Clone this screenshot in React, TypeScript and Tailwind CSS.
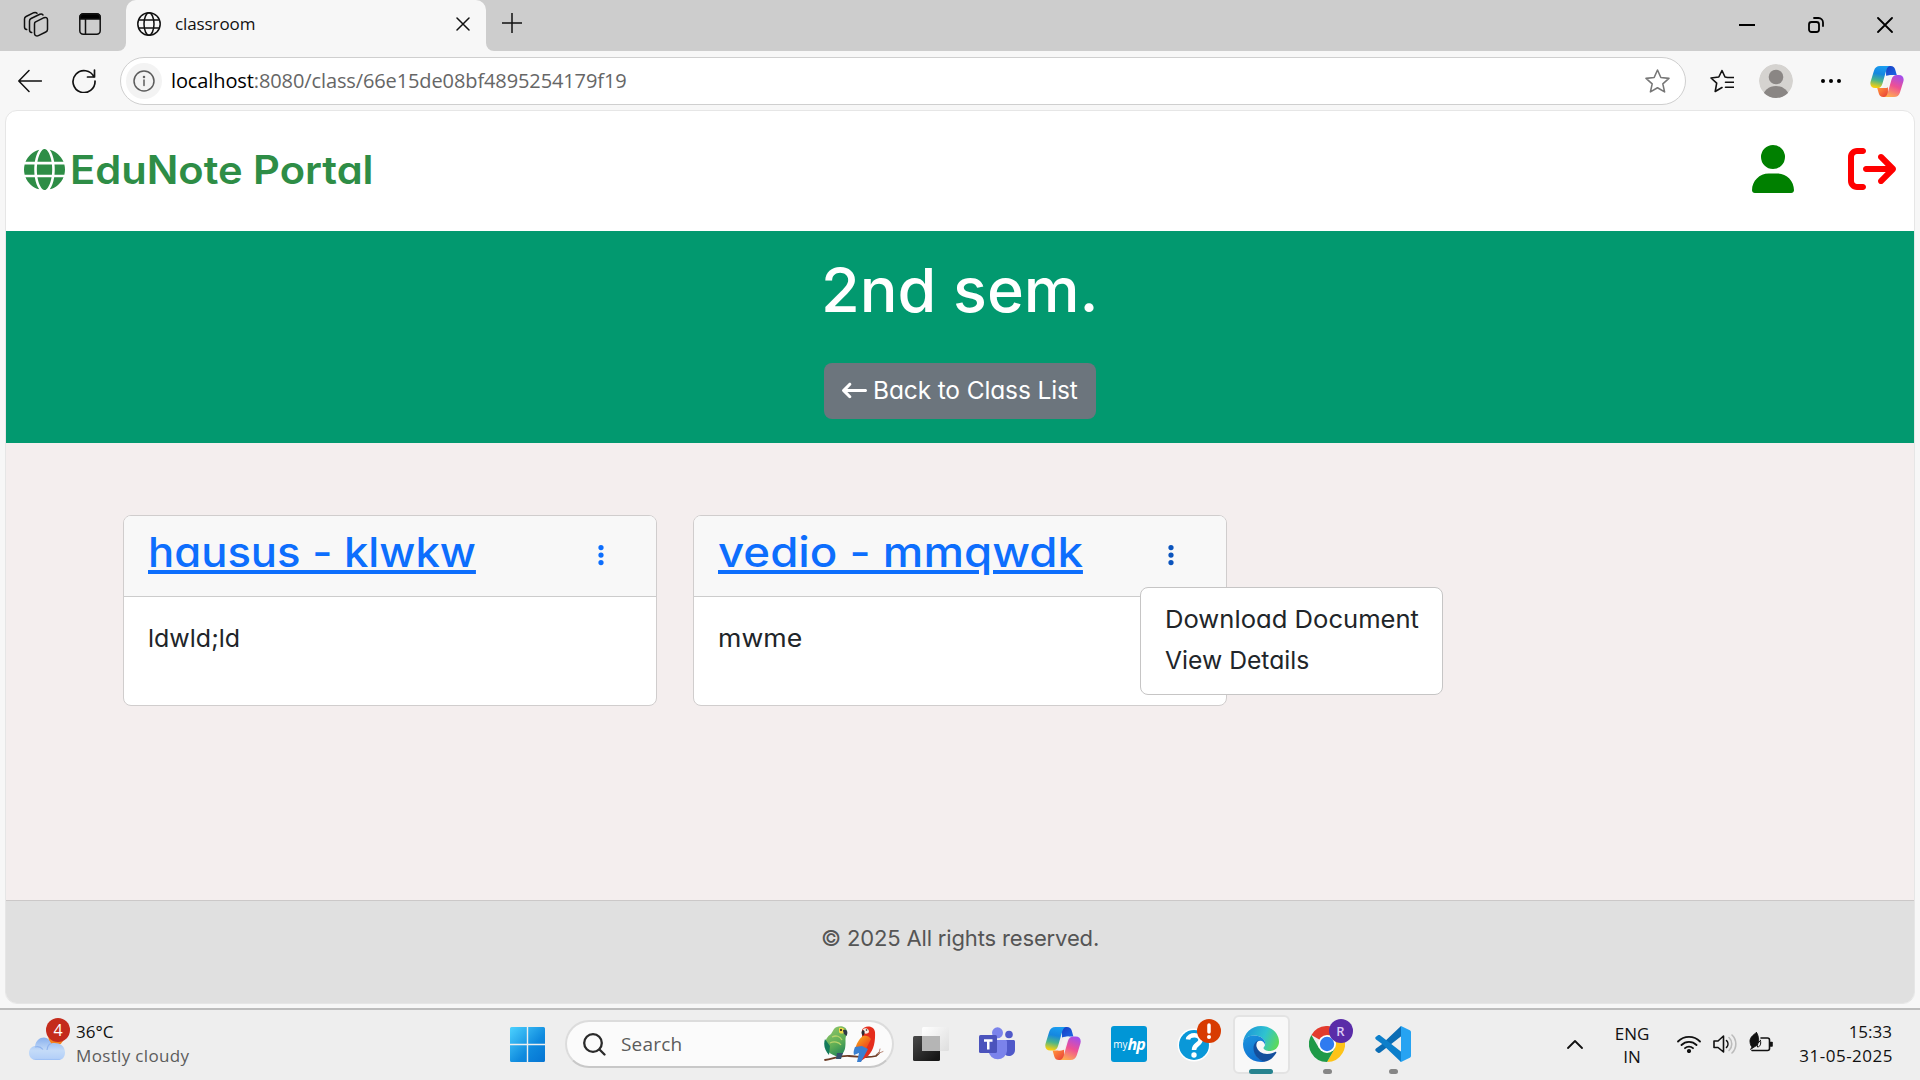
import type { ReactNode } from "react";
import {
  FaArrowLeftLong,
  FaArrowRightFromBracket,
  FaEllipsisVertical,
  FaGlobe,
  FaUser,
} from "react-icons/fa6";

const CopilotIcon = ({ id, className }: { id: string; className: string }) => (
  <svg viewBox="0 0 36 33" className={className} fill="none">
    <defs>
      <linearGradient id={id + "a"} x1="12" y1="0" x2="7" y2="24" gradientUnits="userSpaceOnUse">
        <stop offset="0" stopColor="#1a9df0" />
        <stop offset=".35" stopColor="#1587e0" />
        <stop offset=".65" stopColor="#4bb58a" />
        <stop offset=".95" stopColor="#f5cf10" />
      </linearGradient>
      <linearGradient id={id + "b"} x1="30" y1="9" x2="20" y2="33" gradientUnits="userSpaceOnUse">
        <stop offset="0" stopColor="#a04df0" />
        <stop offset=".5" stopColor="#ee5094" />
        <stop offset="1" stopColor="#ffb04f" />
      </linearGradient>
      <linearGradient id={id + "c"} x1="18" y1="0" x2="26" y2="9" gradientUnits="userSpaceOnUse">
        <stop offset="0" stopColor="#1a3fc4" />
        <stop offset="1" stopColor="#1b62e0" />
      </linearGradient>
      <linearGradient id={id + "d"} x1="10" y1="24" x2="18" y2="33" gradientUnits="userSpaceOnUse">
        <stop offset="0" stopColor="#ff8a3a" />
        <stop offset="1" stopColor="#e8403a" />
      </linearGradient>
    </defs>
    <path d="M17 0h5c2.600 0 4 1.400 4.700 3.600L28.400 9.500H23c-2 0-3.500 .3-6 1z" fill={`url(#${id}c)`} />
    <path d="M19 33h-5c-2.600 0-4-1.400-4.700-3.600L7.600 23.500H13c2 0 3.500-.3 6-1z" fill={`url(#${id}d)`} />
    <path d="M10.500 0H21c-2 .5-3 2-3.700 4.300L13.200 18.500c-1 3.400-2.500 5-5.700 5H5.400C1.300 23.500-.5 20.500.6 16.600L4.200 4.800C5.200 1.600 7.200 0 10.500 0z" fill={`url(#${id}a)`} />
    <path d="M25.500 33H15c2-.5 3-2 3.700-4.300l4.100-14.200c1-3.400 2.500-5 5.700-5h2.100c4.100 0 5.900 3 4.800 6.900l-3.600 11.800c-1 3.200-3 4.800-6.300 4.800z" fill={`url(#${id}b)`} />
    <path d="M20 11.500c.5-1.300 1.500-2 4-2-1 1-1.600 2.500-2.200 4.500l-2.200 7c-.5 1.700-1.600 2.500-4 2.500H13c1-1 1.600-2.500 2.200-4.500l2.300-6c.4-1 1-1.500 2.500-1.500z" fill="#f3f3f3" />
  </svg>
);

const line = { fill: "none", stroke: "#111", strokeWidth: 1.5, strokeLinecap: "round", strokeLinejoin: "round" } as const;

const WorkspacesIcon = () => (
  <svg viewBox="0 0 26 26" className="h-[26px] w-[26px]" {...line}>
    <path d="M12.200 11.200 21 6.700c1.500-.7 3.500 0 3.500 2v9.800c0 1.200-.6 2-1.700 2.500l-7.400 3.700c-1.900.9-3.900-.2-3.900-2.200v-9.300c0-.9.200-1.600.7-2z" />
    <path d="M8.700 21.500c-1.500-.3-2.200-1.200-2.200-2.600V10c0-1.200.6-2 1.600-2.500l8.700-4.200c1.200-.5 2.400-.3 3.200.6" />
    <path d="M3.700 18.600C2.200 18.300 1.500 17.500 1.500 16V8c0-1.200.6-2 1.600-2.500l7.700-3.800c1.200-.5 2.400-.3 3.200.6" />
  </svg>
);

const TabActionsIcon = () => (
  <svg viewBox="0 0 22 22" className="h-[22px] w-[22px]" {...line}>
    <rect x=".8" y=".8" width="20.400" height="20.400" rx="3.500" />
    <path d="M1 6V4a3 3 0 0 1 3-3h14a3 3 0 0 1 3 3v2z" fill="#000" />
    <path d="M6.500 6v15" />
  </svg>
);

const TabGlobeIcon = () => (
  <svg viewBox="0 0 24 24" className="h-6 w-6" {...line}>
    <circle cx="12" cy="12" r="11.200" />
    <ellipse cx="12" cy="12" rx="5" ry="11.200" />
    <path d="M1.800 8h20.400M1.800 16h20.400" />
  </svg>
);

const WindowsLogo = () => (
  <svg viewBox="0 0 35 35" className="h-[35px] w-[35px]">
    <defs>
      <linearGradient id="win" x1="0" y1="0" x2="35" y2="35" gradientUnits="userSpaceOnUse">
        <stop offset="0" stopColor="#4cd2ff" />
        <stop offset=".6" stopColor="#0f8ade" />
        <stop offset="1" stopColor="#0574d2" />
      </linearGradient>
    </defs>
    <path fill="url(#win)" d="M1.500 0H16.800V16.800H0V1.500A1.500 1.500 0 0 1 1.500 0zM18.200 0h15.300A1.500 1.500 0 0 1 35 1.500v15.300H18.200zM0 18.200h16.800V35H1.500A1.500 1.500 0 0 1 0 33.500zM18.200 18.200H35v15.300a1.500 1.500 0 0 1-1.500 1.500H18.200z" />
  </svg>
);

const Parrots = () => (
  <svg viewBox="0 0 60 38" className="h-[38px] w-[60px]">
    <defs>
      <linearGradient id="gp" x1="4" y1="4" x2="22" y2="32" gradientUnits="userSpaceOnUse">
        <stop offset="0" stopColor="#8cc36a" />
        <stop offset=".5" stopColor="#5fae55" />
        <stop offset="1" stopColor="#137a58" />
      </linearGradient>
      <linearGradient id="rp" x1="34" y1="10" x2="50" y2="28" gradientUnits="userSpaceOnUse">
        <stop offset="0" stopColor="#f9b21c" />
        <stop offset=".5" stopColor="#f0601c" />
        <stop offset="1" stopColor="#e12a18" />
      </linearGradient>
    </defs>
    <path d="M1 35c8-1 14-4.500 24-4 10 .5 18 2.500 27 0l3-3" fill="none" stroke="#6d3c26" strokeWidth="1.800" strokeLinecap="round" />
    <path d="M53 29l6-2.500M55 28l1-4" fill="none" stroke="#b98a7a" strokeWidth="1" strokeLinecap="round" />
    <path d="M10 4C13 0 22 0 23 6c.3 3-1.500 5-1.500 8 0 7 .500 12-5 17-4 1-9-1-13-5C-1 20 1 13 7 9z" fill="url(#gp)" />
    <path d="M1 14c-2 6 0 12 4 16l1-9z" fill="#147a5a" />
    <path d="M8 12c4-2 8-1 10 3M6 18c4-2 9-1 11 2" fill="none" stroke="#b8d46a" strokeWidth="1.300" />
    <path d="M15 3c4-1 6 1 6 4-2 2-5 2-6 0z" fill="#f0d848" />
    <path d="M19 5c4-1 5.500 2 3.500 6-2-1-3.500-3-3.500-6z" fill="#2f3a46" />
    <circle cx="17" cy="5" r="1.100" fill="#222" />
    <path d="M13 28h6l-2 6h-5z" fill="#35506c" />
    <path d="M38 5c2-5 12-5 13 2 .5 9-1 18-7 24l-7 5 1-13z" fill="#e52d1c" />
    <path d="M39 11c-4 3-7 8-8 14l10 1 6-12c-2-3-5-4-8-3z" fill="url(#rp)" />
    <path d="M31 22c-1 3-2 5-1 8l5-2-2 9h4l7-13-6-3z" fill="#3a7fd0" />
    <path d="M39 4c3-2 6 0 6 3-1 2-4 2-5 1z" fill="#f7ece2" />
    <path d="M39 5c-2 1-2 4 0 6 1-1 2-3 1.500-5z" fill="#2f2b30" />
    <circle cx="42.500" cy="5" r=".8" fill="#222" />
  </svg>
);

const TaskViewIcon = () => (
  <svg viewBox="0 0 36 34" className="h-[34px] w-9">
    <defs>
      <linearGradient id="tv1" x1="0" y1="9" x2="20" y2="34" gradientUnits="userSpaceOnUse">
        <stop offset="0" stopColor="#4a4a4a" />
        <stop offset="1" stopColor="#161616" />
      </linearGradient>
      <linearGradient id="tv2" x1="9" y1="0" x2="36" y2="24" gradientUnits="userSpaceOnUse">
        <stop offset="0" stopColor="#fff" />
        <stop offset="1" stopColor="#dedede" />
      </linearGradient>
    </defs>
    <rect x="0" y="9" width="27" height="25" rx="1.500" fill="url(#tv1)" />
    <rect x="9" y="0" width="27" height="24" rx="1.500" fill="url(#tv2)" />
    <path d="M9 9h18v15H9z" fill="#b5b5b5" />
  </svg>
);

const TeamsIcon = () => (
  <svg viewBox="0 0 36 34" className="h-[34px] w-9">
    <circle cx="30" cy="7.500" r="3.800" fill="#5059c9" />
    <path d="M26 13h8.500c.8 0 1.500.7 1.500 1.500v8.500a6 6 0 0 1-10 4.500z" fill="#5059c9" />
    <circle cx="18.500" cy="5.800" r="5.500" fill="#7b83eb" />
    <path d="M12 13h14.500c.8 0 1.500.7 1.500 1.500V24a9.300 9.300 0 0 1-18.500 0z" fill="#7b83eb" />
    <rect x="0" y="8" width="18" height="18" rx="1.500" fill="#4b53bc" />
    <path d="M5 13.500h8.500M9.250 13.500v9" stroke="#fff" strokeWidth="2.500" />
  </svg>
);

const MyHpIcon = () => (
  <span className="flex h-9 w-9 items-center justify-center rounded-[3px] bg-[#0096d6] font-['Open_Sans',sans-serif] leading-9 text-white">
    <span className="text-[10px] font-medium">my</span>
    <span className="text-[16px] font-bold italic tracking-[-1px]">hp</span>
  </span>
);

const HelpIcon = () => (
  <svg viewBox="0 0 34 34" className="h-[34px] w-[34px] overflow-visible">
    <circle cx="16" cy="18" r="16.500" fill="#fff" />
    <circle cx="16" cy="18" r="15" fill="#0a98d8" />
    <path d="M10 12.500c.5-5.500 12.500-6 12.500.5 0 4.500-6.500 4-6.500 10" fill="none" stroke="#fff" strokeWidth="4.500" />
    <circle cx="16" cy="28" r="2.700" fill="#fff" />
  </svg>
);

const EdgeIcon = () => (
  <svg viewBox="0 0 36 36" className="h-9 w-9">
    <defs>
      <linearGradient id="ed1" x1="4" y1="6" x2="36" y2="20" gradientUnits="userSpaceOnUse">
        <stop offset="0" stopColor="#1f9bd8" />
        <stop offset=".5" stopColor="#2fc3d0" />
        <stop offset="1" stopColor="#62dc4c" />
      </linearGradient>
      <linearGradient id="ed2" x1="2" y1="12" x2="14" y2="36" gradientUnits="userSpaceOnUse">
        <stop offset="0" stopColor="#1a90dc" />
        <stop offset="1" stopColor="#0f6fd0" />
      </linearGradient>
    </defs>
    <path d="M0 17C.8 7 8.500 0 18 0c10.500 0 18 7.500 18 15.800C36 21.300 32 25 27 25c-4 0-6.500-1.500-6.500-3 0-1 1.700-1.700 1.700-4.500 0-4-4.200-8-10.700-8C5 9.500 1 13 0 17z" fill="url(#ed1)" />
    <path d="M0 18C.5 12 5.500 9.300 11.500 9.500c6.500 0 10.700 4 10.700 8l-.2 1.500c-.5-2.500-2.300-4.300-4.700-4.300-3.300 0-6 3.300-6 8.300C11.300 29 16 34 22 35.500c-1.300.4-2.700.5-4 .5C7 36 0 27.500 0 18z" fill="url(#ed2)" />
    <path d="M10.500 22c0-3.800 2.500-7 5.500-8-2 1.500-3 4-2.500 6.500C14.500 25 19 28 24 28c3.500 0 6-.8 8-2 1-.5 1.800.1 1.200 1-3 5-7 8-11.700 8.700C15 34 10.500 28.500 10.500 22z" fill="#134f9c" />
  </svg>
);

const ChromeIcon = () => (
  <svg viewBox="0 0 36 36" className="h-9 w-9">
    <path d="M18 18 2.400 9A18 18 0 0 1 33.600 9z" fill="#e33b2e" />
    <path d="M18 9h15.600A18 18 0 0 1 18 36l7.800-13.500z" fill="#fdc318" />
    <path d="M2.400 9A18 18 0 0 0 18 36l7.800-13.500L18 18 10.200 22.500z" fill="#1f9a48" />
    <circle cx="18" cy="18" r="9" fill="#fff" />
    <circle cx="18" cy="18" r="7.200" fill="#2f7bf0" />
  </svg>
);

const VsCodeIcon = () => (
  <svg viewBox="0 0 36 36" className="h-9 w-9">
    <path d="M26 0 6.500 18.500 1 22.500c-1 .8-1 2 0 2.700l2 1.500c.8.500 1.600.5 2.300-.1L26.500 10z" fill="#0a6cb4" />
    <path d="M26 36 6.500 17.500 1 13.500c-1-.8-1-2 0-2.700l2-1.500c.8-.5 1.600-.5 2.300.1L26.500 26z" fill="#0c7fcb" />
    <path d="M26 0l8.800 4.200c.8.400 1.200 1 1.200 1.800v24c0 .8-.4 1.400-1.200 1.800L26 36c-.6 0-.5 0 0-1z" fill="#26a3f2" />
  </svg>
);

const WeatherIcon = () => (
  <svg viewBox="0 0 36 26" className="h-[26px] w-9">
    <defs>
      <linearGradient id="cl" x1="0" y1="0" x2="0" y2="26" gradientUnits="userSpaceOnUse">
        <stop offset="0" stopColor="#7da8ec" />
        <stop offset=".6" stopColor="#c4dbf8" />
        <stop offset=".9" stopColor="#b4d0f8" />
        <stop offset="1" stopColor="#82aef2" />
      </linearGradient>
    </defs>
    <circle cx="27" cy="3" r="7.500" fill="#f58220" />
    <path d="M7 25c-4 0-7-3-7-7 0-4 2.500-6.500 6-7C7 5.500 10.500 2.500 15 2.500c3.500 0 5.500 2 7 6 6-1.500 14 1 14 9 0 5-3 7.500-7 7.500z" fill="url(#cl)" />
    <path d="M6 12c3-1 6 0 8 2.500M18 15c.5-4 2-6 4-6.500" fill="none" stroke="#8fb3ee" strokeWidth="1.200" />
  </svg>
);

const TaskItem = ({ children, indicator, active }: { children: ReactNode; indicator?: boolean; active?: boolean }) => (
  <div className="flex w-[66px] shrink-0 justify-center">
    <div
      className={
        active
          ? "relative flex h-[59px] w-[57px] items-center justify-center rounded-[6px] border-2 border-[#e3e3e3] bg-[#f8f8f8] pb-px"
          : "relative flex h-[59px] w-[57px] items-center justify-center pb-px"
      }
    >
      {children}
      {active && <span className="absolute bottom-[-2px] left-[14px] h-[5px] w-6 rounded-full bg-[#27838f]" />}
      {indicator && <span className="absolute bottom-0 left-6 h-[5px] w-[9px] rounded-full bg-[#868686]" />}
    </div>
  </div>
);

const NoteCard = ({ title, body, titleClass, bodyClass, menu }: { title: string; body: string; titleClass: string; bodyClass: string; menu?: ReactNode }) => (
  <article className="relative h-[191px] w-[534px] rounded-lg border border-[#d0cdcd] bg-white">
    <div className="flex h-[81px] items-start justify-between rounded-t-[7px] border-b border-[#cccccc] bg-[#f8f8f8] pr-[52px] pl-6">
      <a className={"mt-[11px] block h-[50px] origin-left whitespace-nowrap text-[41px] leading-[50px] font-medium text-[#0d6efd] underline decoration-4 underline-offset-[3px] " + titleClass}>{title}</a>
      <FaEllipsisVertical className={menu ? "mt-[27px] h-6 w-[6px] text-[#0b54bd]" : "mt-[27px] h-6 w-[6px] text-[#0d6efd]"} />
    </div>
    <p className={"mt-[25px] ml-6 w-fit origin-left text-[24.500px] leading-[32px] text-[#212529] " + bodyClass}>{body}</p>
    {menu}
  </article>
);

export default function App() {
  return (
    <div className="flex h-[1080px] w-[1920px] flex-col overflow-hidden bg-[#f7f7f7] font-['Open_Sans','Noto_Sans',sans-serif] text-[#111]">
      <header className="flex h-[51px] shrink-0 items-end bg-[#cdcdcd]">
        <div className="flex h-[51px] w-[126px] items-center gap-[30px] pb-[3px] pl-[23px]">
          <WorkspacesIcon />
          <TabActionsIcon />
        </div>
        <div className="relative flex h-[51px] w-[360px] items-center rounded-t-[10px] bg-[#f7f7f7] pb-[3px] pl-[11px]">
          <span className="absolute bottom-0 -left-2 h-2 w-2 bg-[#f7f7f7]"><span className="block h-2 w-2 rounded-br-lg bg-[#cdcdcd]" /></span>
          <span className="absolute -right-2 bottom-0 h-2 w-2 bg-[#f7f7f7]"><span className="block h-2 w-2 rounded-bl-lg bg-[#cdcdcd]" /></span>
          <TabGlobeIcon />
          <span className="ml-[14px] text-[17px] leading-6 tracking-[-0.1px]">classroom</span>
          <svg viewBox="0 0 14 14" className="ml-auto mr-4 h-[14px] w-[14px]" {...line}><path d="M1 1l12 12M13 1 1 13" /></svg>
        </div>
        <svg viewBox="0 0 20 20" className="mb-[18px] ml-4 h-5 w-5" {...line}><path d="M10 0v20M0 10h20" /></svg>
        <div className="mr-[27px] mb-[18px] ml-auto flex items-center gap-[53px]">
          <svg viewBox="0 0 16 16" className="h-4 w-4" {...line} stroke="#000" strokeWidth={2} strokeLinecap="butt"><path d="M0 8h16" /></svg>
          <svg viewBox="0 0 16 16" className="h-4 w-4" {...line} stroke="#000" strokeWidth={1.800}><rect x="1" y="5" width="10" height="10" rx="2.500" /><path d="M6 1h4.500A4.500 4.500 0 0 1 15 5.500V9" /></svg>
          <svg viewBox="0 0 16 16" className="h-4 w-4" {...line} stroke="#000" strokeWidth={1.800}><path d="M1 1l14 14M15 1 1 15" /></svg>
        </div>
      </header>

      <nav className="flex h-[59px] shrink-0 items-center pt-px pl-[18px]">
        <svg viewBox="0 0 24 24" className="h-6 w-6" {...line}><path d="M23.500 12H1M11 1.500.8 12 11 22.500" /></svg>
        <svg viewBox="0 0 24 24" className="ml-[30px] h-6 w-6" {...line} strokeWidth={1.700}><path d="M22 8A11 11 0 1 0 23 12M22.500 1v7h-7" /></svg>
        <div className="ml-6 flex h-12 w-[1566px] items-center rounded-full border border-[#cfcfcf] bg-white pr-[15px] pl-[5px]">
          <span className="flex h-9 w-9 items-center justify-center rounded-full bg-[#f3f3f3]">
            <svg viewBox="0 0 22 22" className="h-[22px] w-[22px]" {...line} stroke="#5c5c5c"><circle cx="11" cy="11" r="10" /><path d="M11 10v5.500" /><circle cx="11" cy="7" r=".5" /></svg>
          </span>
          <span className="ml-[9px] text-[20px] leading-7 tracking-[-0.11px] whitespace-nowrap text-[#666]"><span className="text-black">localhost</span>:8080/class/66e15de08bf4895254179f19</span>
          <svg viewBox="0 0 24 24" className="ml-auto h-[25px] w-[25px]" {...line} stroke="#777"><path d="M12 1l3.200 7.200 7.800.8-5.900 5.200 1.700 7.800L12 18l-6.800 4 1.700-7.800L1 9l7.800-.8z" /></svg>
        </div>
        <svg viewBox="0 0 24 24" className="ml-6 h-6 w-6" {...line} strokeWidth={1.600}><path d="M17.500 8.500 15 8l-3-6.500L8.800 8 1 9l5.700 5.200L5.200 22.500 12 18.500M17 8.500h6.500M15.500 13.300h8M15.500 18.300h8" /></svg>
        <svg viewBox="0 0 34 34" className="ml-[25px] h-[34px] w-[34px]"><defs><clipPath id="av"><circle cx="17" cy="17" r="17" /></clipPath></defs><g clipPath="url(#av)"><circle cx="17" cy="17" r="17" fill="#d5d3d0" /><circle cx="17" cy="13" r="7.300" fill="#8a8684" /><ellipse cx="17" cy="33" rx="13" ry="11" fill="#8a8684" /></g></svg>
        <svg viewBox="0 0 22 6" className="ml-[27px] h-[6px] w-[22px]"><circle cx="3" cy="3" r="2" /><circle cx="11" cy="3" r="2" /><circle cx="19" cy="3" r="2" /></svg>
        <CopilotIcon id="cpa" className="ml-[28px] h-[31px] w-[34px]" />
      </nav>

      <main className="mx-[5px] flex h-[894px] shrink-0 flex-col overflow-hidden rounded-[12px] border border-[#e6e6e6] bg-white font-['Inter',sans-serif] [font-feature-settings:'cv11']">
        <div className="flex h-[120px] shrink-0 items-center pr-[18px] pb-1 pl-[18px]">
          <FaGlobe className="h-[41px] w-[41px] text-[#2e8d46]" />
          <h1 className="mt-[2px] ml-[5px] origin-left scale-x-[1.068] text-[39px] leading-[50px] font-semibold whitespace-nowrap text-[#2e8d46]">EduNote Portal</h1>
          <FaUser className="ml-auto h-12 w-[42px] text-[#008000]" />
          <FaArrowRightFromBracket className="ml-[54px] h-12 w-12 text-[#ff0000]" />
        </div>
        <section className="flex h-[212px] shrink-0 flex-col items-center bg-[#02996f] pt-[22px]">
          <h2 className="scale-x-[1.03] text-[61px] leading-[74px] font-medium text-white">2nd sem.</h2>
          <a className="mt-9 flex h-14 w-[272px] items-center rounded-lg bg-[#6c757d] pb-0.5 pl-[18px] text-[24.500px] leading-8 whitespace-nowrap text-white">
            <FaArrowLeftLong className="mr-[6px] h-[25px] w-[25px]" />
            <span className="tracking-[-0.13px]">Back to Class List</span>
          </a>
        </section>
        <section className="flex h-[457px] shrink-0 items-start gap-9 bg-[#f4eeee] pt-[72px] pl-[117px]">
          <NoteCard title="hausus - klwkw" body="ldwld;ld" titleClass="scale-x-[1.063]" bodyClass="scale-x-[1.02]" />
          <NoteCard
            title="vedio - mmqwdk"
            body="mwme"
            titleClass="scale-x-[1.113]"
            bodyClass="scale-x-[1.09]"
            menu={
              <div className="absolute top-[71px] left-[446px] flex h-[108px] w-[303px] flex-col items-start rounded-lg border border-[#c6c5c5] bg-white pt-[11px] pl-6 text-[24.500px] leading-[41px] text-[#212529]">
                <span className="origin-left scale-x-[1.045] whitespace-nowrap">Download Document</span>
                <span className="origin-left scale-x-[1.008] whitespace-nowrap">View Details</span>
              </div>
            }
          />
        </section>
        <footer className="flex flex-1 justify-center border-t border-[#cbc8c8] bg-[#e0e0e0] pt-[21px]">
          <p className="text-[22px] leading-8 tracking-[-0.15px] whitespace-nowrap text-[#555]">© 2025 All rights reserved.</p>
        </footer>
      </main>

      <div className="flex h-[76px] shrink-0 flex-col pt-1">
        <div className="flex h-[72px] items-center border-t-2 border-[#bdbdbd] bg-[#eeeeee] pb-[2px]">
          <div className="flex w-[510px] items-center pl-[29px]">
            <div className="relative pt-[7px]">
              <WeatherIcon />
              <span className="absolute -top-[10px] left-[17px] flex h-6 w-6 items-center justify-center rounded-full bg-[#c42b1c] text-[16px] leading-6 text-white">4</span>
            </div>
            <div className="ml-[11px] flex flex-col text-[17px] leading-[24px]">
              <span>36°C</span>
              <span className="tracking-[0.35px] text-[#5c5c5c]">Mostly cloudy</span>
            </div>
          </div>
          <WindowsLogo />
          <div className="ml-[20px] flex h-12 w-[329px] items-center rounded-full border-2 border-[#dcdcdc] border-b-[#c8c8c8] bg-[#fbfbfb] pr-[8px] pl-4">
            <svg viewBox="0 0 23 23" className="h-[23px] w-[23px]" {...line} stroke="#2a2a2a" strokeWidth={2.300}><circle cx="10" cy="10" r="8.800" /><path d="M16.500 16.500 21.500 21.500" /></svg>
            <span className="ml-[15px] text-[19px] leading-7 tracking-[0.2px] text-[#5c5c5c]">Search</span>
            <span className="ml-auto"><Parrots /></span>
          </div>
          <div className="ml-1 flex items-center">
            <TaskItem><TaskViewIcon /></TaskItem>
            <TaskItem><TeamsIcon /></TaskItem>
            <TaskItem><CopilotIcon id="cpb" className="h-[33px] w-9" /></TaskItem>
            <TaskItem><MyHpIcon /></TaskItem>
            <TaskItem>
              <HelpIcon />
              <svg viewBox="0 0 24 24" className="absolute top-[4px] right-[3px] h-6 w-6"><circle cx="12" cy="12" r="12" fill="#d83b01" /><path d="M12 6v7" stroke="#fff" strokeWidth="3.500" strokeLinecap="round" /><circle cx="12" cy="18" r="2" fill="#fff" /></svg>
            </TaskItem>
            <TaskItem active><EdgeIcon /></TaskItem>
            <TaskItem indicator>
              <ChromeIcon />
              <span className="absolute top-[4px] right-[3px] flex h-6 w-6 items-center justify-center rounded-full bg-[#5a2ca8] text-[13px] leading-6 font-semibold text-[#dccbf5]">R</span>
            </TaskItem>
            <TaskItem indicator><VsCodeIcon /></TaskItem>
          </div>
          <svg viewBox="0 0 16 9" className="ml-[141px] h-[9px] w-4" {...line} strokeWidth={1.800}><path d="M1 8l7-7 7 7" /></svg>
          <div className="ml-[31px] flex w-9 flex-col items-center pt-px text-[17px] leading-[23px]"><span>ENG</span><span>IN</span></div>
          <svg viewBox="0 0 24 18" className="ml-[27px] h-[18px] w-6" {...line} strokeWidth={1.800}><path d="M1 6.500a15.500 15.500 0 0 1 22 0M4.500 10a10.600 10.600 0 0 1 15 0M8 13.200a5.700 5.700 0 0 1 8 0" /><circle cx="12" cy="16" r="1.200" fill="#111" /></svg>
          <svg viewBox="0 0 24 20" className="ml-3 h-5 w-6" {...line} strokeWidth={1.600}><path d="M1 7v6.500h4L10.500 18V2L5 7zM13.500 6.500a5 5 0 0 1 0 7" /><path d="M16 3.500a9 9 0 0 1 0 13M19 1a12.500 12.500 0 0 1 0 18" stroke="#bbb" /></svg>
          <svg viewBox="0 0 24 20" className="mb-1 ml-3 h-5 w-6" {...line} strokeWidth={1.600}>
            <path d="M12 6h6.500a2 2 0 0 1 2 2v8.500a2 2 0 0 1-2 2H3" />
            <path d="M21.500 10.500h1.500v3.500h-1.500z" fill="#111" />
            <path d="M7.500.5C3 3.500.5 6.500 1 10c.2 2.500 1 4 2 5l-1.500 2.500L6 14.500c3-1 4-3 3.700-6.500C9.500 5 9 2.500 7.500.5z" fill="#111" strokeWidth=".8" />
            <path d="M11.500 8.500c-2.500 2-3.500 4-3 6.500 2.500-.3 3.800-2.500 3-6.500z" fill="#eee" strokeWidth="1" />
          </svg>
          <div className="mr-[28px] ml-auto flex flex-col items-end text-[17px] leading-6"><span>15:33</span><span className="-mr-px tracking-[0.5px]">31-05-2025</span></div>
        </div>
      </div>
    </div>
  );
}
